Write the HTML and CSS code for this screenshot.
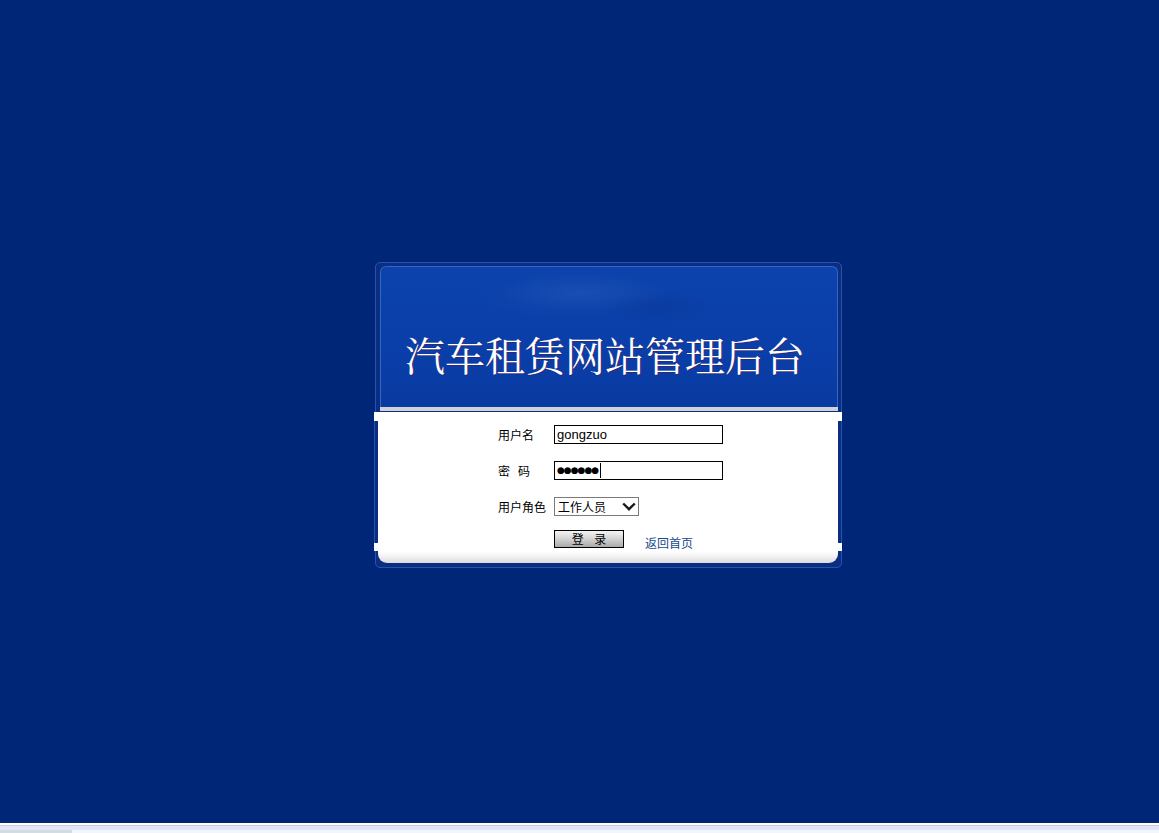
FILE: index.html
```html
<!DOCTYPE html>
<html lang="zh-CN">
<head>
<meta charset="utf-8">
<title>汽车租赁网站管理后台</title>
<link rel="stylesheet" href="styles.css">
</head>
<body>
<div class="page">
  <div class="stage">
    <div class="frame">
      <div class="banner">
        <div class="car"></div>
        <div class="car car2"></div>
        <h1 class="title">汽车租赁网站管理后台</h1>
      </div>
      <div class="strip"></div>
      <form class="body">
        <div class="row">
          <span class="label">用户名</span>
          <input class="field" type="text" value="gongzuo">
        </div>
        <div class="row">
          <span class="label">密&nbsp;&nbsp;&nbsp;码</span>
          <div class="field pwd">●●●●●●<span class="caret"></span></div>
        </div>
        <div class="row">
          <span class="label">用户角色</span>
          <div class="select">
            <span>工作人员</span>
            <svg class="chev" width="14" height="9" viewBox="0 0 14 9"><path d="M1.2 1.5 L7 7.2 L12.8 1.5" fill="none" stroke="#1a1a1a" stroke-width="2.4"/></svg>
          </div>
        </div>
        <div class="row actions">
          <button class="btn" type="button">登 录</button>
          <a class="home" href="#">返回首页</a>
        </div>
      </form>
      <div class="foot"></div>
    </div>
  </div>
  <div class="scroll">
    <div class="scroll-line"></div>
    <div class="scroll-track"></div>
    <div class="scroll-bottom"><span class="thumb"></span></div>
  </div>
</div>
</body>
</html>
```

FILE: styles.css
```css
html, body {
  margin: 0;
  padding: 0;
  height: 100%;
}
body {
  background: #002677;
  font-family: "Liberation Sans", Arial, "Noto Sans CJK SC", sans-serif;
  overflow: hidden;
}
.page {
  height: 833px;
  display: flex;
  flex-direction: column;
}
.stage {
  flex: 1;
  padding: 262px 0 0 375px;
}
.frame {
  width: 465px;
  height: 301px;
  border: 1px solid #2a52a8;
  border-radius: 5px;
  background: #0a2e84;
  padding-top: 3px;
  box-sizing: content-box;
  display: flex;
  flex-direction: column;
}
.banner {
  position: relative;
  margin: 0 3px 0 4px;
  height: 140px;
  flex: none;
  border: 1px solid #3566c2;
  border-bottom: none;
  border-radius: 6px 6px 0 0;
  background:
    radial-gradient(ellipse 130px 34px at 42% 20%, rgba(70,120,210,0.12), rgba(70,120,210,0) 75%),
    linear-gradient(180deg, #0b42ab 0%, #0a3ea8 60%, #093aa1 100%);
  overflow: hidden;
}
.car {
  position: absolute;
  left: 95px;
  top: 2px;
  width: 220px;
  height: 46px;
  background: radial-gradient(ellipse 110px 23px at 50% 50%, rgba(120,165,235,0.08), rgba(120,165,235,0) 80%);
}
.car2 {
  left: 200px;
  top: 20px;
  width: 150px;
  height: 40px;
  background: radial-gradient(ellipse 75px 20px at 50% 50%, rgba(10,40,120,0.18), rgba(10,40,120,0) 80%);
}
.title {
  position: relative;
  margin: 0;
  padding: 64px 0 0 24px;
  font-family: "Noto Serif CJK SC", "Noto Sans CJK SC", serif;
  font-weight: 400;
  font-size: 40px;
  line-height: 46px;
  color: #ffffff;
  text-shadow: 1px 1px 0 rgba(70,30,90,0.7);
}
.strip {
  margin: 0 3px 0 4px;
  height: 4px;
  flex: none;
  background: #d2d2d6;
  border-bottom: 1px solid #0a2e84;
}
.body {
  position: relative;
  margin: 0 -1px 0 -2px;
  height: 139px;
  flex: none;
  box-sizing: border-box;
  background: #ffffff;
  padding: 13px 0 0 124px;
  display: flex;
  flex-direction: column;
  gap: 17px;
  font-size: 12px;
}
.body::before,
.body::after {
  content: "";
  position: absolute;
  top: 9px;
  height: 122px;
  width: 4px;
  background: #0a2e84;
  border-left: 1px solid #2a52a8;
  box-sizing: border-box;
}
.body::before {
  left: 0;
}
.body::after {
  right: 0;
  width: 4px;
  border-left: none;
  border-right: 1px solid #2a52a8;
}
.row {
  display: flex;
  align-items: center;
  height: 19px;
}
.label {
  width: 56px;
  color: #000;
  font-family: "Noto Sans CJK SC", sans-serif;
  font-size: 12px;
  line-height: 19px;
}
.field {
  width: 169px;
  height: 19px;
  box-sizing: border-box;
  border: 1px solid #000;
  padding: 0 2px;
  margin: 0;
  font-family: "Liberation Sans", Arial, sans-serif;
  font-size: 13px;
  color: #000;
  background: #fff;
  outline: none;
}
.pwd {
  display: flex;
  align-items: center;
  font-family: "DejaVu Sans", sans-serif;
  font-size: 9px;
  letter-spacing: -1px;
  line-height: 17px;
  padding-left: 2px;
}
.caret {
  display: inline-block;
  width: 1px;
  height: 15px;
  background: #000;
  margin-left: 2px;
}
.select {
  width: 85px;
  height: 19px;
  box-sizing: border-box;
  border: 1px solid #7a7a7a;
  display: flex;
  align-items: center;
  justify-content: space-between;
  padding: 0 2px 0 3px;
  font-family: "Noto Sans CJK SC", sans-serif;
  font-size: 12px;
  color: #000;
}
.chev {
  display: block;
}
.actions {
  margin-top: -3px;
  align-items: flex-start;
  padding-left: 56px;
  height: 20px;
}
.btn {
  width: 70px;
  height: 18px;
  border: 1px solid #000;
  padding: 0;
  background: linear-gradient(180deg, #f4f4f4 0%, #d6d6d6 45%, #a9a9a9 100%);
  font-family: "Noto Sans CJK SC", sans-serif;
  font-size: 12px;
  line-height: 16px;
  color: #000;
  letter-spacing: 4px;
  text-indent: 4px;
}
.home {
  margin: 6px 0 0 21px;
  color: #174a8a;
  text-decoration: none;
  font-family: "Noto Sans CJK SC", sans-serif;
  font-size: 12px;
  line-height: 14px;
}
.foot {
  margin: 0 3px 0 2px;
  height: 12px;
  flex: none;
  border-radius: 0 0 9px 9px;
  background: linear-gradient(180deg, #ffffff 0%, #f4f4f4 40%, #dcdcdc 100%);
}
.scroll {
  height: 10px;
  display: flex;
  flex-direction: column;
}
.scroll-line {
  height: 2px;
  background: #ffffff;
}
.scroll-track {
  height: 5px;
  background: #e2e5f6;
  border-top: 1px solid #c9cbdc;
  box-sizing: border-box;
}
.scroll-bottom {
  height: 3px;
  background: #f4f4fc;
  display: flex;
}
.thumb {
  width: 72px;
  background: #d3dce3;
}
```
